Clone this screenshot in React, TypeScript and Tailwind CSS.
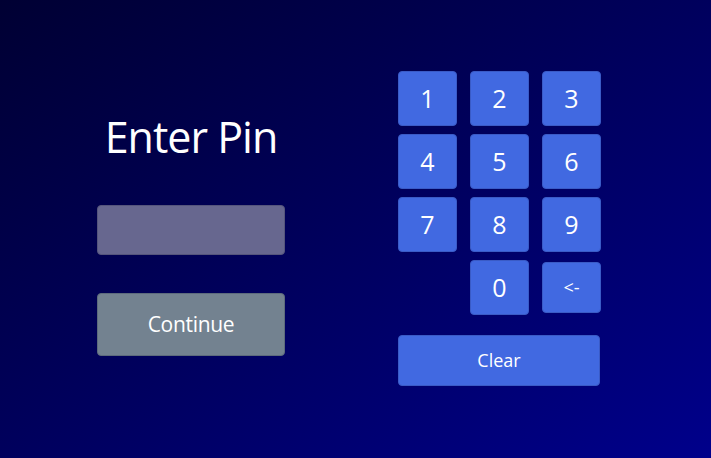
import React from "react"

const keys = ["1", "2", "3", "4", "5", "6", "7", "8", "9"]

export default function App() {
  return (
    <div
      className="w-full h-[458px] bg-linear-to-br from-[#000033] to-[#00008b] flex pt-[71px] pl-[97px] text-white"
      style={{ fontFamily: '"Open Sans", "Noto Sans", sans-serif' }}
    >
      <div className="flex flex-col w-[188px]">
        <h1 className="mt-[38px] h-[56px] text-center text-[43px] leading-[56px] font-normal tracking-[-1px]">
          Enter Pin
        </h1>
        <input
          type="password"
          className="mt-[40px] h-[50px] w-full rounded-[4px] border border-[#55557c] bg-[#67678f] outline-none"
        />
        <button className="mt-[38px] h-[63px] w-full rounded-[4px] border border-[#5d6b7c] bg-[#738290] text-[21px] tracking-[-0.3px]">
          Continue
        </button>
      </div>
      <div className="ml-[113px] flex flex-col w-[203px]">
        <div className="grid grid-cols-[59px_59px_59px] gap-x-[13px] gap-y-[8px]">
          {keys.map((k) => (
            <button
              key={k}
              className="h-[55px] rounded-[4px] border border-[#3a5bc6] bg-[#4169e1] text-[25px]"
            >
              {k}
            </button>
          ))}
          <div />
          <button className="h-[55px] rounded-[4px] border border-[#3a5bc6] bg-[#4169e1] text-[25px]">
            0
          </button>
          <button className="mt-[2px] h-[51px] rounded-[4px] border border-[#3a5bc6] bg-[#4169e1] text-[18px]">
            &lt;-
          </button>
        </div>
        <button className="mt-[20px] h-[51px] w-[202px] rounded-[4px] border border-[#3a5bc6] bg-[#4169e1] text-[18px]">
          Clear
        </button>
      </div>
    </div>
  )
}
